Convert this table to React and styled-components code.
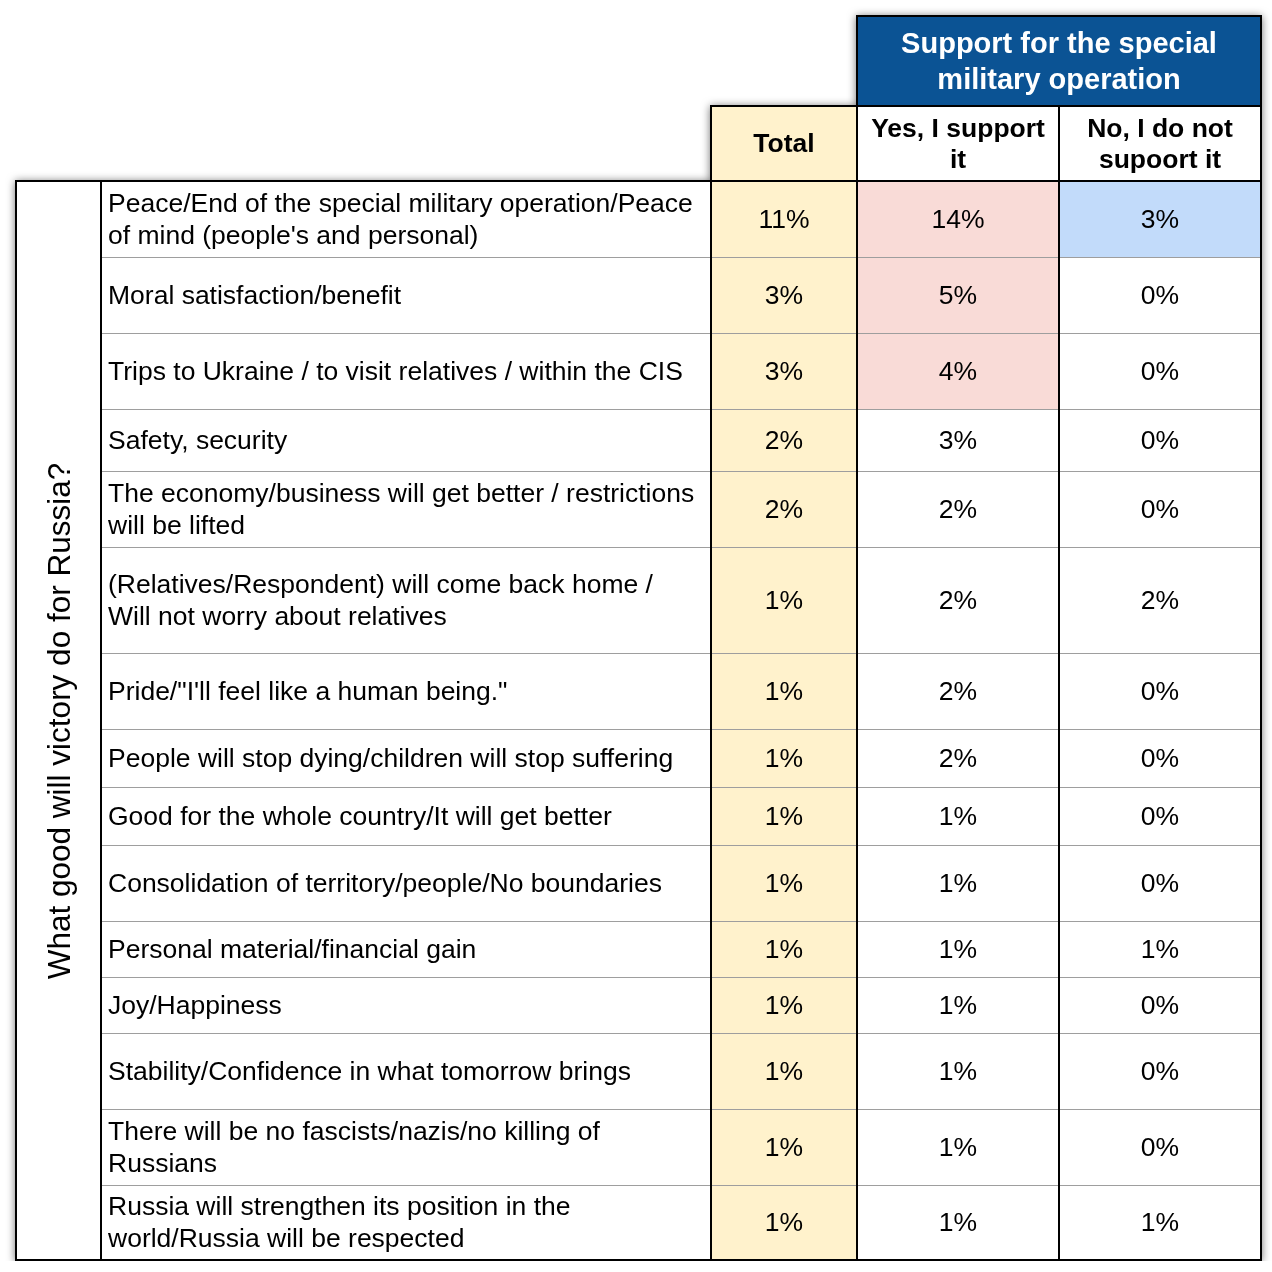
import React from "react";
import styled, { createGlobalStyle } from "styled-components";

const rows = [
  { text: ["Peace/End of the special military operation/Peace", "of mind (people's and personal)"], total: "11%", yes: "14%", no: "3%", h: 76, yesHot: true, noCool: true },
  { text: ["Moral satisfaction/benefit"], total: "3%", yes: "5%", no: "0%", h: 76, yesHot: true },
  { text: ["Trips to Ukraine / to visit relatives / within the CIS"], total: "3%", yes: "4%", no: "0%", h: 76, yesHot: true },
  { text: ["Safety, security"], total: "2%", yes: "3%", no: "0%", h: 62 },
  { text: ["The economy/business will get better / restrictions", "will be lifted"], total: "2%", yes: "2%", no: "0%", h: 76 },
  { text: ["(Relatives/Respondent) will come back home /", "Will not worry about relatives"], total: "1%", yes: "2%", no: "2%", h: 106 },
  { text: ['Pride/"I\'ll feel like a human being."'], total: "1%", yes: "2%", no: "0%", h: 76 },
  { text: ["People will stop dying/children will stop suffering"], total: "1%", yes: "2%", no: "0%", h: 58 },
  { text: ["Good for the whole country/It will get better"], total: "1%", yes: "1%", no: "0%", h: 58 },
  { text: ["Consolidation of territory/people/No boundaries"], total: "1%", yes: "1%", no: "0%", h: 76 },
  { text: ["Personal material/financial gain"], total: "1%", yes: "1%", no: "1%", h: 56 },
  { text: ["Joy/Happiness"], total: "1%", yes: "1%", no: "0%", h: 56 },
  { text: ["Stability/Confidence in what tomorrow brings"], total: "1%", yes: "1%", no: "0%", h: 76 },
  { text: ["There will be no fascists/nazis/no killing of", "Russians"], total: "1%", yes: "1%", no: "0%", h: 76 },
  { text: ["Russia will strengthen its position in the", "world/Russia will be respected"], total: "1%", yes: "1%", no: "1%", h: 75 },
];

const GlobalStyle = createGlobalStyle`
  html, body {
    margin: 0;
    background: #ffffff;
  }
  body {
    font-family: "Liberation Sans", Arial, sans-serif;
    color: #000;
  }
`;

const Page = styled.div`
  padding: 15px 0 0 15px;
`;

const Table = styled.table`
  border-collapse: collapse;
  table-layout: fixed;
  width: 1245px;
  filter: drop-shadow(0 1px 4px rgba(0, 0, 0, 0.55));
  font-size: 26.5px;
  line-height: 32px;
`;

const Row = styled.tr`
  height: ${(p) => p.$h}px;
`;

const Blank = styled.td`
  padding: 0;
  border: none;
  background: transparent;
`;

const GroupHead = styled.th`
  background: #0b5394;
  color: #ffffff;
  font-weight: 700;
  font-size: 29px;
  line-height: 36px;
  text-align: center;
  vertical-align: middle;
  border: 2px solid #000;
  padding: 0 8px;
`;

const ColHead = styled.th`
  background: ${(p) => p.$bg || "#ffffff"};
  font-weight: 700;
  text-align: center;
  vertical-align: middle;
  border: 2px solid #000;
  padding: 0 6px;
  line-height: 31px;
`;

const SideLabel = styled.td`
  background: #ffffff;
  border: 2px solid #000;
  padding: 0;
  position: relative;
`;

const SideText = styled.div`
  position: absolute;
  left: 50%;
  top: 50%;
  transform: translate(-50%, -50%) rotate(-90deg);
  white-space: nowrap;
  font-size: 31.5px;
`;

const ItemCell = styled.td`
  background: #ffffff;
  border-left: 2px solid #000;
  border-right: 2px solid #000;
  border-top: ${(p) => (p.$first ? "2px solid #000" : "1px solid #9e9e9e")};
  border-bottom: ${(p) => (p.$last ? "2px solid #000" : "1px solid #9e9e9e")};
  padding: 0 6px;
  vertical-align: middle;
  white-space: nowrap;
`;

const ValueCell = styled(ItemCell)`
  background: ${(p) => p.$bg || "#ffffff"};
  text-align: center;
  padding: 0;
`;

const YELLOW = "#fff2cc";
const PINK = "#f9dbd7";
const BLUE = "#c2dbfa";

export default function App() {
  return (
    <>
      <GlobalStyle />
      <Page>
        <Table>
          <colgroup>
            <col style={{ width: 85 }} />
            <col style={{ width: 610 }} />
            <col style={{ width: 146 }} />
            <col style={{ width: 202 }} />
            <col style={{ width: 202 }} />
          </colgroup>
          <tbody>
            <Row $h={90}>
              <Blank colSpan={3} />
              <GroupHead colSpan={2}>
                Support for the special
                <br />
                military operation
              </GroupHead>
            </Row>
            <Row $h={75}>
              <Blank colSpan={2} />
              <ColHead $bg={YELLOW}>Total</ColHead>
              <ColHead>
                Yes, I support
                <br />
                it
              </ColHead>
              <ColHead>
                No, I do not
                <br />
                supoort it
              </ColHead>
            </Row>
            {rows.map((r, i) => {
              const first = i === 0;
              const last = i === rows.length - 1;
              return (
                <Row key={i} $h={r.h}>
                  {first && (
                    <SideLabel rowSpan={rows.length}>
                      <SideText>What good will victory do for Russia?</SideText>
                    </SideLabel>
                  )}
                  <ItemCell $first={first} $last={last}>
                    {r.text.map((line, j) => (
                      <React.Fragment key={j}>
                        {j > 0 && <br />}
                        {line}
                      </React.Fragment>
                    ))}
                  </ItemCell>
                  <ValueCell $first={first} $last={last} $bg={YELLOW}>
                    {r.total}
                  </ValueCell>
                  <ValueCell $first={first} $last={last} $bg={r.yesHot ? PINK : undefined}>
                    {r.yes}
                  </ValueCell>
                  <ValueCell $first={first} $last={last} $bg={r.noCool ? BLUE : undefined}>
                    {r.no}
                  </ValueCell>
                </Row>
              );
            })}
          </tbody>
        </Table>
      </Page>
    </>
  );
}
